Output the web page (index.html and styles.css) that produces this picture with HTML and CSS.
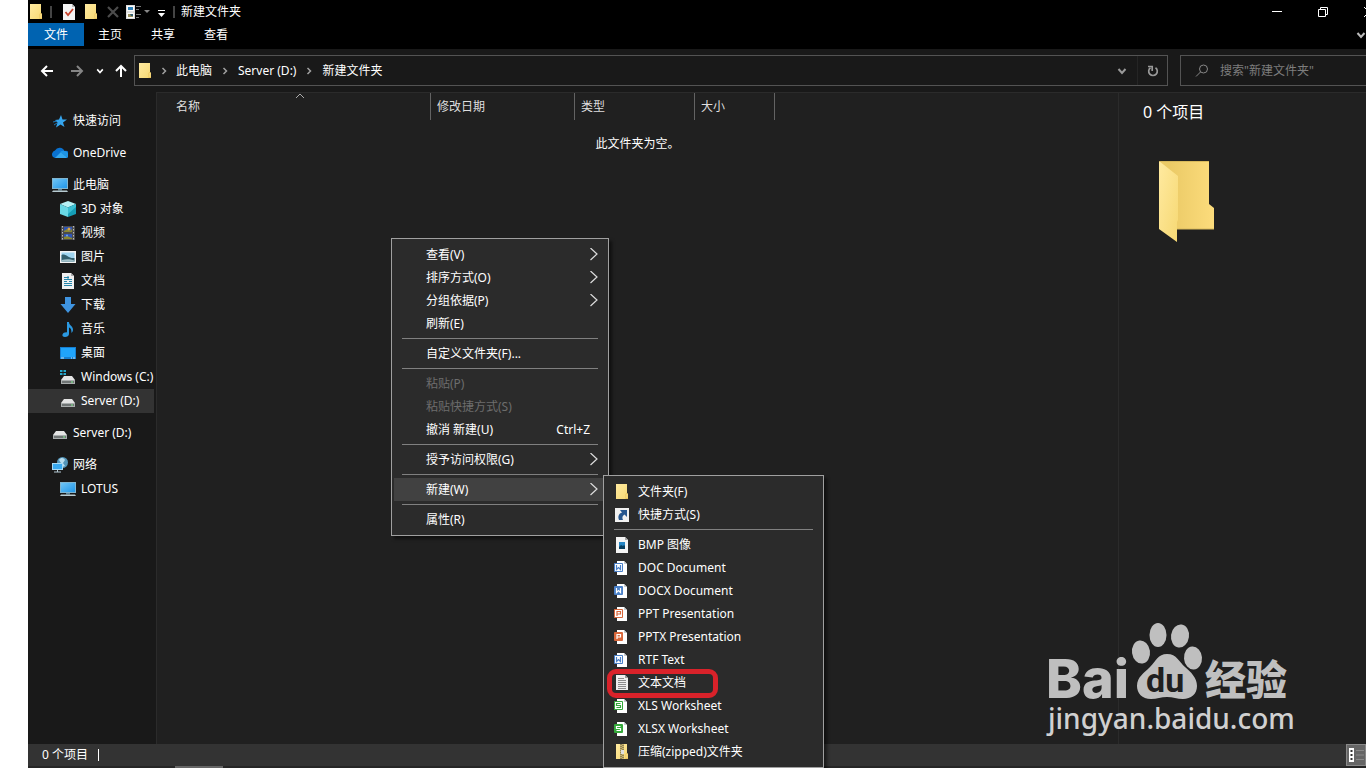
FILE: index.html
```html
<!DOCTYPE html>
<html lang="zh-CN">
<head>
    <meta charset="UTF-8">
    <meta name="viewport" content="width=device-width, initial-scale=1.0">
    <title>新建文件夹</title>
    <link rel="stylesheet" href="styles.css">
</head>
<body>
    <svg class="defs" aria-hidden="true">
        <defs>
            <linearGradient id="gold" x1="0" y1="0" x2="1" y2="1"><stop offset="0" stop-color="#ffeaa0"/><stop offset="1" stop-color="#f6d873"/></linearGradient>
            <linearGradient id="gold-back" x1="0" y1="0" x2="1" y2="0"><stop offset="0.2" stop-color="#ebca66"/><stop offset="1" stop-color="#fcdc7c"/></linearGradient>
            <linearGradient id="sky" x1="0" y1="0" x2="1" y2="1"><stop offset="0" stop-color="#6fc5f5"/><stop offset="1" stop-color="#2196e8"/></linearGradient>
        </defs>
        <symbol id="folder" viewBox="0 0 16 16"><path d="M2 0h11v9l1 1v5H2z" fill="url(#gold)"/><path d="M11.500 15v-5l1-1 1.500 1v5z" fill="#eac45b"/><path d="M12.500 10h1v4h-1z" fill="#ffe89a"/></symbol>
        <symbol id="check-page" viewBox="0 0 16 16"><path d="M2 0h9l3 3v13H2z" fill="#f4f4f4"/><path d="M11 0v3h3z" fill="#bbb"/><path d="M4.500 8l2.500 3 5-6" fill="none" stroke="#c8432c" stroke-width="1.800"/></symbol>
        <symbol id="views" viewBox="0 0 16 16"><path d="M0 1h9v14H0z" fill="#ddd"/><path d="M1 2h7v5H1zM1 9h7v5H1z" fill="#fafafa"/><path d="M2 3h5v3H2z" fill="#2d80b8"/><path d="M2 10h5v3H2z" fill="#9a9260"/><path d="M4 10h3v2H5z" fill="#335d70"/><path d="M10 2.500h5M10 5.500h3M10 10.500h5M10 13.500h3" stroke="#777"/></symbol>
        <symbol id="chevron" viewBox="0 0 10 10"><path d="M1.500 3l3.500 4 3.500-4" fill="none" stroke="currentColor" stroke-width="2"/></symbol>
        <symbol id="crumb" viewBox="0 0 10 10"><path d="M3.500 2l3 3-3 3" fill="none" stroke="#a0a0a0" stroke-width="1.500"/></symbol>
        <symbol id="arrow" viewBox="0 0 14 14"><path d="M13 7H2M7 2L2 7l5 5" fill="none" stroke="currentColor" stroke-width="2"/></symbol>
        <symbol id="more" viewBox="0 0 8 14"><path d="M.500 0L7 6 .500 12" fill="none" stroke="#ddd" stroke-width="1.200"/></symbol>
        <symbol id="star" viewBox="0 0 16 16"><path d="M9 2l1.500 4.500H15l-4 3 1.500 4.500-4-2.500L4 14.500l1.500-5L3 7l4-.500z" fill="#35a5ee"/><path d="M1 9l4-1M2 12l3-2" stroke="#1b77b8"/></symbol>
        <symbol id="cloud" viewBox="0 0 16 16"><path d="M1 12a4 4 0 0 1 2-6.500A5.200 5.200 0 0 1 12.500 6 3.500 3.500 0 0 1 14.500 13H3z" fill="#0a72d0"/><path d="M3 13l6-6 6 5.500-1 .500z" fill="#35a8ee"/><path d="M8 7a5 5 0 0 1 5-1 4 4 0 0 1 2.500 6.500z" fill="#1e94e4"/></symbol>
        <symbol id="pc" viewBox="0 0 16 16"><path d="M0 1h16v11H0z" fill="#80b5d0"/><path d="M1 2h14v9H1z" fill="url(#sky)"/><path d="M6 12h4v1.500H6z" fill="#5b8599"/><path d="M1 13.500h14l1 1.500H0z" fill="#b8cbd2"/></symbol>
        <symbol id="cube" viewBox="0 0 16 16"><path d="M8 0l8 3-8 3.500L0 3z" fill="#b7f2f6"/><path d="M0 3l8 3.500V16l-8-3z" fill="#69d9e6"/><path d="M8 6.500L16 3v10l-8 3z" fill="#159db5"/><path d="M8 6.500L16 3v3l-8 7z" fill="#3bbfd2"/></symbol>
        <symbol id="film" viewBox="0 0 16 16"><path d="M1 1h14v14H1z" fill="#4b4b4b"/><path d="M2.500 1v14M13.500 1v14" stroke="#bbb" stroke-dasharray="1.500 1.500"/><path d="M4 2h8v5H4zM4 9h8v5H4z" fill="#2f55b5"/><path d="M4 6l3-2 3 2 2-2v3H4zM4 12l3-1 5 2v1H4z" fill="#8a8830"/><circle cx="9" cy="4" r="1.500" fill="#d6a347"/><circle cx="7" cy="10.500" r="1" fill="#75a6ec"/></symbol>
        <symbol id="picture" viewBox="0 0 16 16"><path d="M0 2h16v12H0z" fill="#f2f2f2"/><path d="M1.500 3.500h13v9h-13z" fill="#9ed4ef"/><path d="M1.500 6c4-2 7 4 13 3v3.500h-13z" fill="#335f6d"/><path d="M1.500 11c5-1 8-1 13 .500v1h-13z" fill="#a2c1c9"/></symbol>
        <symbol id="document" viewBox="0 0 16 16"><path d="M2 0h9l3 3v13H2z" fill="#efefef"/><path d="M11 0v3h3z" fill="#aaa"/><path d="M4 4.500h5M4 6.500h8M4 8.500h3M9 8.500h3M4 10.500h8M4 12.500h8M8 3v4" stroke="#2584a8"/></symbol>
        <symbol id="download" viewBox="0 0 16 16"><path d="M5 0h6v7h4.500L8 16 .500 7H5z" fill="#3f94e0"/></symbol>
        <symbol id="music" viewBox="0 0 16 16"><path d="M7 1h2c0 4 4 3.500 4 8 0 1-.500 2-1.500 3 0-4-1-5-2.500-5.500V13c0 2-2 3-4 3s-3-1-2.500-2.500S5.500 11 7 11.500z" fill="#2b99e2"/></symbol>
        <symbol id="desktop" viewBox="0 0 16 16"><path d="M0 2h16v12H0z" fill="#167fd1"/><path d="M1 3h14v9H1z" fill="#20a4fb"/><path d="M1 13h3M11 13h1M13 13h2" stroke="#c5eaff"/></symbol>
        <symbol id="drive" viewBox="0 0 16 16"><path d="M4 6h8l3 4H1z" fill="#e4e4e4"/><path d="M1 10h14v4H1z" fill="#a9adad"/><path d="M2 11h12v2H2z" fill="#6f7474"/><path d="M11 12h2" stroke="#7ff08c"/></symbol>
        <symbol id="windrive" viewBox="0 0 16 16"><use href="#drive" y="1"/><path d="M0 1h2.500v2H0zM3.500 1H6v2H3.500zM0 4h2.500v2H0zM3.500 4H6v2H3.500z" fill="#26a8cc"/></symbol>
        <symbol id="network" viewBox="0 0 16 16"><circle cx="10.500" cy="5.500" r="5.500" fill="#5395b9"/><path d="M7 3c2-3 5-2 6 0l-2 3 2 3-3 1-1-4z" fill="#b7dced"/><path d="M0 6h11v7H0z" fill="#a6d9f3"/><path d="M1 7h9v5H1z" fill="#38a8ee"/><path d="M5 13h1v1.500h3v1H2v-1h3z" fill="#b6cad3"/></symbol>
        <symbol id="shortcut" viewBox="0 0 16 16"><path d="M1 1h14v14H1z" fill="#f1f1f1"/><path d="M6 3h7v7l-2.500-2.500C8 9 8 11 9 13H5C3.500 9 5 6.500 8 5.500z" fill="#27578f"/></symbol>
        <symbol id="bmp" viewBox="0 0 16 16"><path d="M2 0h9l3 3v13H2z" fill="#f4f4f4"/><path d="M11 0v3h3z" fill="#aaa"/><path d="M5 5h6v7H5z" fill="#2586c4"/><path d="M5 10l2-2 2 1 1-1 1 1v3H5z" fill="#083f60"/></symbol>
        <symbol id="sheet" viewBox="0 0 16 16"><path d="M3 1h7l3 3v11H3z" fill="#fff"/><path d="M10 1v3h3z" fill="#c7cdd2"/></symbol>
        <symbol id="doc" viewBox="0 0 16 16"><use href="#sheet"/><path d="M.500 3.500h8v8h-8z" fill="#fff" stroke="#4a80c8"/><path d="M2.500 5v4.500l2-2 2 2V5" fill="none" stroke="#4a80c8" stroke-width="1.200"/></symbol>
        <symbol id="docx" viewBox="0 0 16 16"><use href="#sheet"/><rect y="3" width="9" height="9" rx="1" fill="#4a80c8"/><path d="M2.500 5v4.500l2-2 2 2V5" fill="none" stroke="#fff" stroke-width="1.200"/></symbol>
        <symbol id="ppt" viewBox="0 0 16 16"><use href="#sheet"/><path d="M.500 3.500h8v8h-8z" fill="#fff" stroke="#d9683c"/><path d="M3 10V5.500h3.500V8H3" fill="none" stroke="#d9683c" stroke-width="1.200"/></symbol>
        <symbol id="pptx" viewBox="0 0 16 16"><use href="#sheet"/><rect y="3" width="9" height="9" rx="1" fill="#d9683c"/><path d="M3 10V5.500h3.500V8H3" fill="none" stroke="#fff" stroke-width="1.200"/></symbol>
        <symbol id="xls" viewBox="0 0 16 16"><use href="#sheet"/><path d="M.500 3.500h8v8h-8z" fill="#fff" stroke="#35a83b"/><path d="M6.500 5.500h-4v2h4v2h-4" fill="none" stroke="#35a83b" stroke-width="1.200"/></symbol>
        <symbol id="xlsx" viewBox="0 0 16 16"><use href="#sheet"/><rect y="3" width="9" height="9" rx="1" fill="#35a83b"/><path d="M6.500 5.500h-4v2h4v2h-4" fill="none" stroke="#fff" stroke-width="1.200"/></symbol>
        <symbol id="text" viewBox="0 0 16 16"><path d="M2 0h9l3 3v12H2z" fill="#efefef"/><path d="M11 0v3h3z" fill="#999"/><path d="M4 3.500h6M4 5.500h8M4 7.500h8M4 9.500h8M4 11.500h8M4 13.500h8" stroke="#8d8d8d"/></symbol>
        <symbol id="zip" viewBox="0 0 16 16"><use href="#folder"/><path d="M6 0h4v15H6z" fill="#c9b36c"/><path d="M7 0v15M9 1v14" stroke="#57523f" stroke-dasharray="1 1"/><path d="M7 6h3v4H7z" fill="#ddd"/></symbol>
    </svg>

    <div class="window">
        <header class="titlebar">
            <svg class="icon"><use href="#folder"/></svg>
            <span class="divider"></span>
            <button class="quick" aria-label="属性"><svg class="icon"><use href="#check-page"/></svg></button>
            <button class="quick" aria-label="新建文件夹"><svg class="icon"><use href="#folder"/></svg></button>
            <button class="quick" aria-label="删除"><svg class="icon" viewBox="0 0 16 16"><path d="M3 3l10 10M13 3L3 13" stroke="#4c4c4c" stroke-width="2.200"/></svg></button>
            <button class="quick views" aria-label="视图"><svg class="icon"><use href="#views"/></svg><svg class="caret" viewBox="0 0 6 4"><path d="M0 0h6L3 3z" fill="#888"/></svg></button>
            <button class="quick custom" aria-label="自定义"><svg class="icon" viewBox="0 0 16 16"><path d="M4 6.500h7" stroke="#fff"/><path d="M4 9h7l-3.500 4z" fill="#fff"/></svg></button>
            <span class="divider"></span>
            <h1>新建文件夹</h1>
            <div class="controls">
                <button aria-label="最小化"><svg viewBox="0 0 10 10"><path d="M0 4.500h10" stroke="#fff"/></svg></button>
                <button aria-label="还原"><svg viewBox="0 0 10 10"><path d="M.500 2.500h7v7h-7zM2.500 2V.500h7v7H8" fill="none" stroke="#fff"/></svg></button>
                <button aria-label="关闭"><svg viewBox="0 0 10 10"><path d="M0 0l10 10M10 0L0 10" stroke="#fff"/></svg></button>
            </div>
        </header>

        <nav class="tabs">
            <a class="active" href="#">文件</a>
            <a href="#">主页</a>
            <a href="#">共享</a>
            <a href="#">查看</a>
            <button aria-label="展开功能区"><svg viewBox="0 0 10 10"><use href="#chevron"/></svg></button>
        </nav>

        <div class="toolbar">
            <div class="history">
                <button aria-label="后退"><svg class="arrow"><use href="#arrow"/></svg></button>
                <button class="dim" aria-label="前进"><svg class="arrow forward"><use href="#arrow"/></svg></button>
                <button class="recent" aria-label="最近"><svg class="small"><use href="#chevron"/></svg></button>
                <button class="up" aria-label="上移"><svg class="arrow upward"><use href="#arrow"/></svg></button>
            </div>
            <nav class="address">
                <svg class="icon"><use href="#folder"/></svg>
                <svg class="crumb"><use href="#crumb"/></svg>
                <a href="#">此电脑</a>
                <svg class="crumb"><use href="#crumb"/></svg>
                <a href="#">Server (D:)</a>
                <svg class="crumb"><use href="#crumb"/></svg>
                <a href="#">新建文件夹</a>
                <button class="drop" aria-label="历史记录"><svg viewBox="0 0 10 10"><use href="#chevron"/></svg></button>
                <button class="refresh" aria-label="刷新"><svg viewBox="0 0 12 12"><path d="M8.500 2.700A4.300 4.300 0 1 1 3.500 2.700" fill="none" stroke="currentColor" stroke-width="1.700"/><path d="M1 1.500h4.200V6" fill="none" stroke="currentColor" stroke-width="1.700"/></svg></button>
            </nav>
            <label class="search">
                <svg viewBox="0 0 14 14"><circle cx="8.500" cy="5" r="4" fill="none" stroke="#888"/><path d="M5.500 8L1 12.500" stroke="#888"/></svg>
                <input type="search" aria-label="搜索" placeholder="搜索&quot;新建文件夹&quot;">
            </label>
        </div>

        <div class="content">
            <nav class="sidebar">
                <a href="#"><svg class="icon"><use href="#star"/></svg>快速访问</a>
                <a class="group" href="#"><svg class="icon"><use href="#cloud"/></svg>OneDrive</a>
                <a class="group" href="#"><svg class="icon"><use href="#pc"/></svg>此电脑</a>
                <a class="child" href="#"><svg class="icon"><use href="#cube"/></svg>3D 对象</a>
                <a class="child" href="#"><svg class="icon"><use href="#film"/></svg>视频</a>
                <a class="child" href="#"><svg class="icon"><use href="#picture"/></svg>图片</a>
                <a class="child" href="#"><svg class="icon"><use href="#document"/></svg>文档</a>
                <a class="child" href="#"><svg class="icon"><use href="#download"/></svg>下载</a>
                <a class="child" href="#"><svg class="icon"><use href="#music"/></svg>音乐</a>
                <a class="child" href="#"><svg class="icon"><use href="#desktop"/></svg>桌面</a>
                <a class="child" href="#"><svg class="icon"><use href="#windrive"/></svg>Windows (C:)</a>
                <a class="child selected" href="#"><svg class="icon"><use href="#drive"/></svg>Server (D:)</a>
                <a class="group" href="#"><svg class="icon"><use href="#drive"/></svg>Server (D:)</a>
                <a class="group" href="#"><svg class="icon"><use href="#network"/></svg>网络</a>
                <a class="child" href="#"><svg class="icon"><use href="#pc"/></svg>LOTUS</a>
            </nav>

            <main class="files">
                <table>
                    <thead>
                        <tr>
                            <th class="name">名称<svg class="sort" viewBox="0 0 10 6"><path d="M1 5l4-4 4 4" fill="none" stroke="#aaa"/></svg></th>
                            <th class="date">修改日期</th>
                            <th class="type">类型</th>
                            <th class="size">大小</th>
                        </tr>
                    </thead>
                </table>
                <p class="empty">此文件夹为空。</p>
            </main>

            <aside class="details">
                <h2>0 个项目</h2>
                <svg class="big-folder" viewBox="0 0 56 84">
                    <path d="M0 1h50v43l5 4v21H0z" fill="url(#gold-back)"/>
                    <path d="M0 1l19 15v44l-1 2v20L0 69z" fill="url(#gold)"/>
                    <path d="M0 1.500h50M18 69h37" stroke="#d8b95c"/>
                </svg>
            </aside>
        </div>

        <footer class="status">
            <span>0 个项目</span>
            <button aria-label="详细信息"><svg viewBox="0 0 16 16"><path d="M1 1h5v14H1z" fill="#fff"/><path d="M2.500 3h2v2h-2zM2.500 7h2v2h-2zM2.500 11h2v2h-2z" fill="#333"/><path d="M8 3.500h8M8 8h8M8 12.500h8" stroke="#888"/></svg></button>
        </footer>
        <div class="taskbar"><span></span></div>
    </div>

    <svg class="watermark" viewBox="0 0 250 120" role="img" aria-label="Baidu 经验">
        <g fill="#bfbfbf">
            <text class="brand" x="-2" y="78">Bai</text>
            <ellipse cx="93" cy="32" rx="9" ry="11.500" transform="rotate(-8 93 32)"/>
            <ellipse cx="110" cy="15" rx="8.500" ry="12"/>
            <ellipse cx="132" cy="16" rx="9" ry="11.500" transform="rotate(8 132 16)"/>
            <ellipse cx="145" cy="38" rx="9" ry="11.500" transform="rotate(-4 145 38)"/>
            <path d="M119 34c10 0 12 8 18 13s12 11 12 19-6 13-14 13c-6 0-10-2-16-2s-10 2-16 2c-9 0-14-6-14-13 0-9 7-13 13-19s8-13 17-13z"/>
            <text class="product" x="157" y="75">经验</text>
        </g>
        <text class="du" x="98" y="72">du</text>
        <text class="site" x="0" y="109">jingyan.baidu.com</text>
    </svg>

    <div class="menu context">
        <button>查看(V)<svg class="more"><use href="#more"/></svg></button>
        <button>排序方式(O)<svg class="more"><use href="#more"/></svg></button>
        <button>分组依据(P)<svg class="more"><use href="#more"/></svg></button>
        <button>刷新(E)</button>
        <hr>
        <button>自定义文件夹(F)...</button>
        <hr>
        <button disabled>粘贴(P)</button>
        <button disabled>粘贴快捷方式(S)</button>
        <button>撤消 新建(U)<kbd>Ctrl+Z</kbd></button>
        <hr>
        <button>授予访问权限(G)<svg class="more"><use href="#more"/></svg></button>
        <hr>
        <button class="open">新建(W)<svg class="more"><use href="#more"/></svg></button>
        <hr>
        <button>属性(R)</button>
    </div>

    <div class="menu submenu">
        <button><svg class="icon"><use href="#folder"/></svg>文件夹(F)</button>
        <button><svg class="icon"><use href="#shortcut"/></svg>快捷方式(S)</button>
        <hr>
        <button><svg class="icon"><use href="#bmp"/></svg>BMP 图像</button>
        <button><svg class="icon"><use href="#doc"/></svg>DOC Document</button>
        <button><svg class="icon"><use href="#docx"/></svg>DOCX Document</button>
        <button><svg class="icon"><use href="#ppt"/></svg>PPT Presentation</button>
        <button><svg class="icon"><use href="#pptx"/></svg>PPTX Presentation</button>
        <button><svg class="icon"><use href="#doc"/></svg>RTF Text</button>
        <button class="marked"><svg class="icon"><use href="#text"/></svg>文本文档</button>
        <button><svg class="icon"><use href="#xls"/></svg>XLS Worksheet</button>
        <button><svg class="icon"><use href="#xlsx"/></svg>XLSX Worksheet</button>
        <button><svg class="icon"><use href="#zip"/></svg>压缩(zipped)文件夹</button>
    </div>
</body>
</html>
```
FILE: styles.css
```css
*, *::after {
    box-sizing: border-box;
}
body {
    margin: 0;
    padding-left: 28px;
    height: 100vh;
    overflow: hidden;
    position: relative;
    background: #fff;
    color: #fff;
    font: 12px/16px "Noto Sans", "Noto Sans CJK SC", sans-serif;
}
button {
    display: flex;
    align-items: center;
    justify-content: center;
    padding: 0;
    border: 0;
    background: none;
    color: inherit;
    font: inherit;
}
a {
    color: inherit;
    text-decoration: none;
}
h1, h2, p {
    margin: 0;
    font-weight: normal;
}
svg {
    flex: none;
}
.defs {
    position: absolute;
    width: 0;
    height: 0;
}
.icon {
    width: 16px;
    height: 16px;
}
.window {
    display: flex;
    flex-direction: column;
    height: 100%;
    overflow: hidden;
    background: #191919;
}

/* title bar and ribbon tabs */
.titlebar {
    display: flex;
    align-items: center;
    height: 23px;
    background: #000;
}
.titlebar h1 {
    margin-left: 6px;
    font-size: 12px;
}
.divider {
    width: 2px;
    height: 12px;
    margin: 0 6px;
    background: #444;
}
.quick {
    width: 22px;
    height: 22px;
}
.titlebar .divider:last-of-type {
    margin: 0 0 0 1px;
}
.views {
    width: 28px;
}
.caret {
    width: 6px;
    height: 4px;
    margin-left: 2px;
}
.custom {
    width: 20px;
}
.controls {
    display: flex;
    margin-left: auto;
    margin-right: -26px;
}
.controls button {
    width: 46px;
    height: 20px;
}
.controls svg {
    width: 10px;
    height: 10px;
}
.tabs {
    display: flex;
    height: 26px;
    padding-bottom: 3px;
    background: #000;
}
.tabs a {
    padding: 4px 15px;
    margin-right: -1px;
}
.tabs .active {
    padding: 4px 16px;
    background: #0063b1;
}
.tabs button {
    margin-left: auto;
    color: #bbb;
}
.tabs button svg {
    width: 10px;
    height: 10px;
}

/* navigation and address */
.toolbar {
    display: flex;
    height: 43px;
    padding: 6px 0;
}
.history {
    display: flex;
    align-items: center;
    width: 106px;
    padding-left: 12px;
}
.history button {
    width: 14px;
    margin-right: 16px;
}
.history .dim {
    margin-right: 11px;
    color: #858585;
}
.history .recent {
    width: 10px;
    margin-right: 9px;
}
.history .up {
    margin: 0;
}
.arrow {
    width: 14px;
    height: 14px;
}
.forward {
    transform: rotate(180deg);
}
.upward {
    transform: rotate(90deg);
}
.small {
    width: 8px;
    height: 8px;
}
.address {
    display: flex;
    align-items: center;
    flex: 1;
    padding-left: 2px;
    border: 1px solid #535353;
}
.crumb {
    width: 10px;
    height: 10px;
    margin: 0 8px;
}
.address .icon + .crumb {
    margin: 0 7px 0 6px;
}
.drop {
    margin-left: auto;
    width: 30px;
    height: 100%;
    color: #999;
}
.drop svg {
    width: 10px;
    height: 10px;
}
.refresh {
    width: 30px;
    height: 100%;
    border-left: 1px solid #252525;
    color: #999;
}
.refresh svg {
    width: 12px;
    height: 12px;
}
.search {
    display: flex;
    align-items: center;
    width: 186px;
    margin-left: 12px;
    padding-left: 14px;
    border: 1px solid #535353;
    border-right: 0;
}
.search svg {
    width: 14px;
    height: 14px;
}
.search input {
    flex: 1;
    min-width: 0;
    margin-left: 11px;
    padding: 0;
    border: 0;
    background: none;
    color: #fff;
    font: inherit;
}
.search input::placeholder {
    color: #7d7d7d;
}

/* panes */
.content {
    display: flex;
    flex: 1;
    min-height: 0;
    background: #202020;
}
.sidebar {
    width: 129px;
    padding: 17px 2px 0 0;
    background: #191919;
    border-right: 1px solid #2b2b2b;
}
.sidebar a {
    display: flex;
    align-items: center;
    gap: 5px;
    height: 24px;
    padding-left: 24px;
    overflow: hidden;
    white-space: nowrap;
}
.sidebar .group {
    margin-top: 8px;
}
.sidebar .child {
    padding-left: 32px;
}
.sidebar .selected {
    background: #333;
}
.files {
    flex: 1;
    border-top: 1px solid #2b2b2b;
}
.files table {
    border-spacing: 0;
    table-layout: fixed;
    width: 618px;
    color: #dedede;
}
.files th {
    height: 27px;
    padding: 0 6px;
    border-right: 1px solid #636363;
    font-weight: normal;
    text-align: left;
}
.files .name {
    width: 274px;
    padding-left: 19px;
    position: relative;
}
.files .date {
    width: 144px;
}
.files .type {
    width: 120px;
}
.files .size {
    width: 80px;
}
.sort {
    position: absolute;
    top: 0;
    left: 138px;
    width: 10px;
    height: 6px;
}
.empty {
    padding-top: 16px;
    text-align: center;
}
.details {
    width: 248px;
    padding: 7px 24px;
    border-top: 1px solid #2b2b2b;
    border-left: 1px solid #2b2b2b;
}
.details h2 {
    font-size: 16px;
    line-height: 24px;
}
.big-folder {
    display: block;
    width: 56px;
    height: 84px;
    margin: 36px 0 0 16px;
}
.status {
    display: flex;
    align-items: center;
    justify-content: space-between;
    height: 22px;
    padding-left: 14px;
    background: #333;
}
.status span {
    padding-right: 10px;
    border-right: 1px solid #fff;
    line-height: 12px;
}
.status button {
    width: 20px;
    height: 22px;
    background: #666;
    border: 1px solid #888;
}
.status svg {
    width: 16px;
    height: 16px;
}
.taskbar {
    height: 2px;
    padding-left: 147px;
    background: #262626;
}
.taskbar span {
    display: block;
    width: 48px;
    height: 2px;
    background: #666;
}

/* pop-up menus */
.menu {
    position: absolute;
    padding: 4px 2px;
    border: 1px solid #a0a0a0;
    background: #2b2b2b;
    box-shadow: 3px 3px 3px rgba(0, 0, 0, 0.5);
}
.menu button {
    position: relative;
    width: 100%;
    height: 23px;
    justify-content: flex-start;
    white-space: nowrap;
}
.menu hr {
    height: 1px;
    margin: 3px 8px;
    border: 0;
    background: #808080;
}
.menu button:disabled {
    color: #6d6d6d;
}
.menu .open {
    background: #414141;
}
.context {
    left: 391px;
    top: 238px;
    width: 218px;
}
.context button {
    padding: 0 8px 0 32px;
}
.context kbd {
    margin-left: auto;
    padding-right: 8px;
    font: inherit;
}
.more {
    width: 8px;
    height: 14px;
    margin-left: auto;
}
.submenu {
    left: 603px;
    top: 475px;
    width: 221px;
}
.submenu button {
    gap: 8px;
    padding-left: 8px;
}
.marked::after {
    content: "";
    position: absolute;
    left: 1px;
    top: -2px;
    width: 111px;
    height: 29px;
    border: 5px solid #d9222a;
    border-radius: 9px;
}

/* watermark */
.watermark {
    position: absolute;
    right: 68px;
    bottom: 28px;
    width: 250px;
    height: 120px;
    overflow: visible;
}
.brand {
    font: 800 54px Inter, sans-serif;
}
.product {
    font: 900 41px "Noto Sans CJK SC", sans-serif;
}
.du {
    font: bold 34px Roboto, sans-serif;
    fill: #202020;
}
.site {
    font: 500 28px "Noto Sans", sans-serif;
    fill: #d0d0d0;
}
```
